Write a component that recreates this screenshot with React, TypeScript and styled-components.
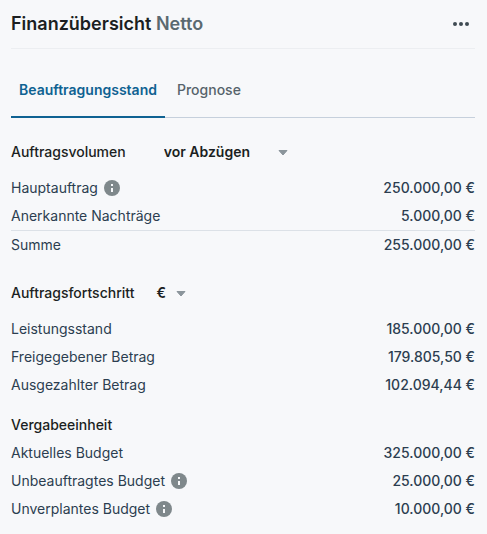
import React from "react";
import styled, { createGlobalStyle } from "styled-components";

const GlobalStyle = createGlobalStyle`
  * { box-sizing: border-box; }
  body {
    margin: 0;
    background: #f7f8fa;
    color: #2c3e50;
    font-family: Inter, "Liberation Sans", sans-serif;
    font-size: 14px;
    line-height: 28px;
  }
`;

const Panel = styled.main`
  padding: 0 12px 11px 11px;
`;

const Header = styled.header`
  display: flex;
  align-items: center;
  justify-content: space-between;
  height: 49px;
  border-bottom: 1px solid #eceef1;
`;

const Title = styled.h1`
  margin: 0;
  font-size: 18px;
  font-weight: 600;
  color: #1b1f22;
`;

const TitleNote = styled.span`
  color: #5a6970;
`;

const MenuButton = styled.button`
  display: flex;
  padding: 5px;
  border: 0;
  background: none;
  color: #3f4b52;
  cursor: pointer;
`;

const Tabs = styled.div`
  display: flex;
  gap: 4px;
  margin-top: 13px;
  height: 56px;
  border-bottom: 1px solid #c6d0dc;
`;

const Tab = styled.button<{ $active?: boolean }>`
  height: 56px;
  padding: 2px 8px 0;
  border: 0;
  border-bottom: 2px solid ${(p) => (p.$active ? "#0f6292" : "transparent")};
  background: none;
  font: inherit;
  font-weight: ${(p) => (p.$active ? 600 : 500)};
  color: ${(p) => (p.$active ? "#0f6292" : "#56636b")};
  cursor: pointer;
`;

const Section = styled.section<{ $gap: number }>`
  margin-top: ${(p) => p.$gap}px;
`;

const SectionHead = styled.div<{ $spaced?: boolean; $gap?: number }>`
  display: flex;
  align-items: center;
  gap: ${(p) => p.$gap ?? 0}px;
  margin-bottom: ${(p) => (p.$spaced ? 8 : 0)}px;
`;

const SectionTitle = styled.h2`
  margin: 0;
  font-size: 14px;
  font-weight: 500;
  color: #1b1f22;
`;

const Picker = styled.span<{ $width: number }>`
  position: relative;
  display: flex;
  align-items: center;
  width: ${(p) => p.$width}px;
`;

const Select = styled.select`
  width: 100%;
  height: 28px;
  padding: 0;
  border: 0;
  appearance: none;
  background: none;
  font: inherit;
  font-weight: 600;
  color: #1b1f22;
  cursor: pointer;
`;

const Caret = styled.svg`
  position: absolute;
  top: 12px;
  right: 0;
  pointer-events: none;
`;

const List = styled.dl`
  margin: 0;
`;

const Row = styled.div<{ $total?: boolean }>`
  display: flex;
  justify-content: space-between;
  border-top: ${(p) => (p.$total ? "1px solid #dce1e7" : "0")};
`;

const Label = styled.dt`
  display: flex;
  align-items: center;
  gap: 6px;
`;

const Amount = styled.dd`
  margin: 0;
  font-weight: 500;
`;

const InfoIcon = () => (
  <svg width="16" height="16" viewBox="0 0 16 16" role="img" aria-label="Info">
    <circle cx="8" cy="8" r="8" fill="#7f888b" />
    <rect x="7" y="4" width="2" height="2" fill="#f7f8fa" />
    <path d="M7 8H9V12H7Z" fill="#f7f8fa" />
  </svg>
);

type Item = { label: string; amount: string; info?: boolean; total?: boolean };

const Items = ({ items }: { items: Item[] }) => (
  <List>
    {items.map((item) => (
      <Row key={item.label} $total={item.total}>
        <Label>
          {item.label}
          {item.info && <InfoIcon />}
        </Label>
        <Amount>{item.amount}</Amount>
      </Row>
    ))}
  </List>
);

const Dropdown = ({ label, width, options }: { label: string; width: number; options: string[] }) => (
  <Picker $width={width}>
    <Select aria-label={label}>
      {options.map((o) => (
        <option key={o}>{o}</option>
      ))}
    </Select>
    <Caret width="10" height="6" viewBox="0 0 10 6" aria-hidden="true">
      <path d="M1 0.5H9L5 5Z" fill="#8b959b" stroke="#8b959b" strokeLinejoin="round" />
    </Caret>
  </Picker>
);

const volume: Item[] = [
  { label: "Hauptauftrag", amount: "250.000,00 €", info: true },
  { label: "Anerkannte Nachträge", amount: "5.000,00 €" },
  { label: "Summe", amount: "255.000,00 €", total: true },
];

const progress: Item[] = [
  { label: "Leistungsstand", amount: "185.000,00 €" },
  { label: "Freigegebener Betrag", amount: "179.805,50 €" },
  { label: "Ausgezahlter Betrag", amount: "102.094,44 €" },
];

const budget: Item[] = [
  { label: "Aktuelles Budget", amount: "325.000,00 €" },
  { label: "Unbeauftragtes Budget", amount: "25.000,00 €", info: true },
  { label: "Unverplantes Budget", amount: "10.000,00 €", info: true },
];

export default function App() {
  return (
    <>
      <GlobalStyle />
      <Panel>
        <Header>
          <Title>
            Finanzübersicht <TitleNote>Netto</TitleNote>
          </Title>
          <MenuButton type="button" aria-label="Mehr">
            <svg width="18" height="6" viewBox="0 0 18 6" fill="currentColor">
              <circle cx="3" cy="3" r="2" />
              <circle cx="9" cy="3" r="2" />
              <circle cx="15" cy="3" r="2" />
            </svg>
          </MenuButton>
        </Header>
        <Tabs role="tablist">
          <Tab type="button" role="tab" aria-selected="true" $active>
            Beauftragungsstand
          </Tab>
          <Tab type="button" role="tab" aria-selected="false">
            Prognose
          </Tab>
        </Tabs>
        <Section $gap={20}>
          <SectionHead $spaced $gap={38}>
            <SectionTitle>Auftragsvolumen</SectionTitle>
            <Dropdown label="Auftragsvolumen" width={124} options={["vor Abzügen", "nach Abzügen"]} />
          </SectionHead>
          <Items items={volume} />
        </Section>
        <Section $gap={20}>
          <SectionHead $spaced $gap={22}>
            <SectionTitle>Auftragsfortschritt</SectionTitle>
            <Dropdown label="Auftragsfortschritt" width={30} options={["€", "%"]} />
          </SectionHead>
          <Items items={progress} />
        </Section>
        <Section $gap={12}>
          <SectionHead>
            <SectionTitle>Vergabeeinheit</SectionTitle>
          </SectionHead>
          <Items items={budget} />
        </Section>
      </Panel>
    </>
  );
}
